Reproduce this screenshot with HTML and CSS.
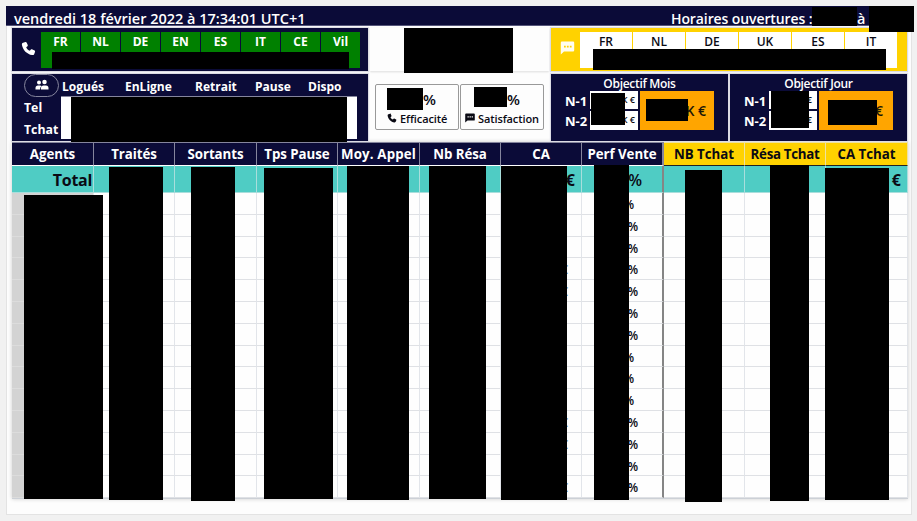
FILE: index.html
```
<!DOCTYPE html>
<html lang="fr">
<head>
<meta charset="utf-8">
<title>Suivi des agents</title>
<link rel="stylesheet" href="styles.css">
</head>
<body>
<main class="board">
  <header class="topbar"><span class="date">vendredi 18 février 2022 à 17:34:01 UTC+1</span><span class="hours">Horaires ouvertures :</span><span class="to">à</span></header>

  <section class="queues">
    <div class="panel phone">
      <svg class="ico-phone" viewBox="0 0 24 24"><path d="M7.2 1.5 3.4 2.8C1.8 3.4 1.2 4.700 1.500 6.300 3 14.500 9.500 21 17.700 22.500c1.600.3 2.900-.3 3.500-1.900l1.300-3.600c.2-.7-.1-1.300-.7-1.700l-4.300-2.100c-.6-.3-1.200-.1-1.700.4l-1.700 2.100C11.500 14.500 9.500 12.500 8.300 9.900l2.100-1.700c.5-.5.7-1.100.4-1.700L8.900 2.200C8.600 1.600 7.900 1.300 7.200 1.500z"/></svg>
      <div class="langs green"><b>FR</b><b>NL</b><b>DE</b><b>EN</b><b>ES</b><b>IT</b><b>CE</b><b>Vil</b></div>
    </div>
    <div class="panel brand"></div>
    <div class="panel chat">
      <svg class="ico-chat" viewBox="0 0 24 24"><path fill-rule="evenodd" d="M2.500 1h19q2 0 2 2v13q0 2-2 2H6l-5.500 5V3q0-2 2-2zM6 8v3h3V8zm5 0v3h3V8zm5 0v3h3V8z"/></svg>
      <div class="langs white"><b>FR</b><b>NL</b><b>DE</b><b>UK</b><b>ES</b><b>IT</b></div>
    </div>
  </section>

  <section class="stats">
    <div class="panel presence">
      <div class="side">
        <span class="pill"><svg viewBox="0 0 28 22"><circle cx="8" cy="6" r="4"/><circle cx="19" cy="5" r="4.500"/><path d="M1 20v-3q0-5 5-5h4q2 0 3 1-3 2-3 7zM12 20v-3q0-5 5-5h5q5 0 5 5v3z"/></svg></span>
        <b>Tel</b><b>Tchat</b>
      </div>
      <div class="states">
        <div class="heads"><b>Logués</b><b>EnLigne</b><b>Retrait</b><b>Pause</b><b>Dispo</b></div>
        <div class="values"></div>
      </div>
    </div>
    <div class="rates">
      <div class="rate"><strong>%</strong><span><svg viewBox="0 0 24 24"><path d="M7.200 1.500 3.400 2.800C1.800 3.400 1.200 4.700 1.500 6.300 3 14.500 9.500 21 17.700 22.500c1.600.3 2.900-.3 3.500-1.900l1.300-3.600c.2-.7-.1-1.300-.7-1.700l-4.300-2.100c-.6-.3-1.200-.1-1.700.4l-1.700 2.100C11.500 14.500 9.500 12.500 8.300 9.900l2.100-1.700c.5-.5.7-1.100.4-1.700L8.900 2.200C8.600 1.600 7.900 1.300 7.200 1.500z"/></svg>Efficacité</span></div>
      <div class="rate second"><strong>%</strong><span><svg viewBox="0 0 24 24"><path fill-rule="evenodd" d="M2.500 1h19q2 0 2 2v13q0 2-2 2H6l-5.500 5V3q0-2 2-2zM6 8v3h3V8zm5 0v3h3V8zm5 0v3h3V8z"/></svg>Satisfaction</span></div>
    </div>
    <div class="panel goal">
      <h2>Objectif Mois</h2>
      <div class="goal-grid"><b>N-1</b><i>K €</i><b>N-2</b><i>K €</i><strong>K €</strong></div>
    </div>
    <div class="panel goal day">
      <h2>Objectif Jour</h2>
      <div class="goal-grid"><b>N-1</b><i>€</i><b>N-2</b><i>€</i><strong>€</strong></div>
    </div>
  </section>

  <section class="agents">
    <div class="row head"><b>Agents</b><b>Traités</b><b>Sortants</b><b>Tps Pause</b><b>Moy. Appel</b><b>Nb Résa</b><b>CA</b><b>Perf Vente</b><b>NB Tchat</b><b>Résa Tchat</b><b>CA Tchat</b></div>
    <div class="row total"><b>Total</b><b></b><b></b><b></b><b></b><b></b><b>€</b><b>%</b><b></b><b></b><b>€</b></div>
    <div class="row narrow"><span></span><span></span><span></span><span></span><span></span><span></span><span></span><span>%</span><span></span><span></span><span></span></div>
    <div class="row"><span></span><span></span><span></span><span></span><span></span><span></span><span></span><span>%</span><span></span><span></span><span></span></div>
    <div class="row"><span></span><span></span><span></span><span></span><span></span><span></span><span></span><span>%</span><span></span><span></span><span></span></div>
    <div class="row"><span></span><span></span><span></span><span></span><span></span><span></span><span>€</span><span>%</span><span></span><span></span><span></span></div>
    <div class="row"><span></span><span></span><span></span><span></span><span></span><span></span><span>€</span><span>%</span><span></span><span></span><span></span></div>
    <div class="row"><span></span><span></span><span></span><span></span><span></span><span></span><span></span><span>%</span><span></span><span></span><span></span></div>
    <div class="row"><span></span><span></span><span></span><span></span><span></span><span></span><span></span><span>%</span><span></span><span></span><span></span></div>
    <div class="row narrow"><span></span><span></span><span></span><span></span><span></span><span></span><span></span><span>%</span><span></span><span></span><span></span></div>
    <div class="row narrow"><span></span><span></span><span></span><span></span><span></span><span></span><span></span><span>%</span><span></span><span></span><span></span></div>
    <div class="row narrow"><span></span><span></span><span></span><span></span><span></span><span></span><span></span><span>%</span><span></span><span></span><span></span></div>
    <div class="row"><span></span><span></span><span></span><span></span><span></span><span></span><span>€</span><span>%</span><span></span><span></span><span></span></div>
    <div class="row"><span></span><span></span><span></span><span></span><span></span><span></span><span>€</span><span>%</span><span></span><span></span><span></span></div>
    <div class="row"><span></span><span></span><span></span><span></span><span></span><span></span><span></span><span>%</span><span></span><span></span><span></span></div>
    <div class="row"><span></span><span></span><span></span><span></span><span></span><span></span><span>€</span><span>%</span><span></span><span></span><span></span></div>
  </section>
</main>

<!-- Masks hiding confidential values -->
<svg class="masks" viewBox="0 0 917 521">
  <rect x="812" y="7" width="45" height="19"/><rect x="869" y="6" width="45" height="26"/>
  <rect x="52" y="52" width="297" height="17"/><rect x="404" y="28" width="109" height="45"/><rect x="593" y="49" width="293" height="21"/>
  <rect x="71" y="97" width="276" height="45"/><rect x="387" y="88" width="36" height="22"/><rect x="474" y="87" width="33" height="20"/>
  <rect x="591" y="93" width="34" height="32"/><rect x="646" y="99" width="42" height="22"/><rect x="771" y="91" width="38" height="37"/><rect x="828" y="100" width="49" height="25"/>
  <rect x="24" y="195" width="79" height="304"/><rect x="109" y="167" width="54" height="333"/><rect x="191" y="167" width="44" height="334"/><rect x="264" y="168" width="69" height="331"/>
  <rect x="347" y="166" width="62" height="334"/><rect x="429" y="166" width="57" height="333"/><rect x="501" y="166" width="66" height="334"/><rect x="594" y="165" width="35" height="335"/>
  <rect x="685" y="170" width="37" height="332"/><rect x="770" y="165" width="39" height="336"/><rect x="825" y="168" width="64" height="332"/>
</svg>
</body>
</html>
```
FILE: styles.css
```
* { box-sizing: border-box; }
body { margin: 0; width: 917px; height: 521px; overflow: hidden; background: #f1f1f1; font-family: "Open Sans", "Noto Sans", sans-serif; font-size: 12px; color: #0a0a14; }
b, strong { font-weight: 700; }
svg { display: block; fill: currentColor; }
.board { margin: 6px 0 0 6px; width: 906px; height: 509px; background: #fdfdfd; box-shadow: inset 0 0 0 1px #e3e3e3; }
.topbar { display: flex; height: 20px; width: 907px; background: #0b0b38; color: #fff; font-size: 14.500px; font-weight: 600; line-height: 25px; white-space: nowrap; border-bottom: 1px solid #55557a; }
.date { margin-left: 8px; width: 657px; }
.hours { width: 186px; font-size: 14px; letter-spacing: -0.100px; }
.panel { background: #0b0b38; box-shadow: 0 0 1px 1px #dcdce4; }

.queues { display: grid; grid-template-columns: 356px 179px 356px; column-gap: 2px; height: 43px; margin: 2px 0 0 6px; }
.phone, .chat { display: flex; padding-top: 4px; }
.ico-phone { width: 15px; height: 15px; margin: 9px 5px 0 9px; color: #fff; }
.langs { display: grid; height: 36px; text-align: center; line-height: 19px; }
.green { grid-template-columns: repeat(8, 39px); column-gap: 1px; color: #fff; }
.green b { background: #008000; }
.panel.brand { background: #fdfdfd; box-shadow: 0 1px 2px #ddd; }
.panel.chat { background: #ffd200; }
.ico-chat { width: 15px; height: 14px; margin: 9px 5px 0 9px; color: #fffdf0; }
.white { grid-template-columns: repeat(6, 52px); column-gap: 1px; }
.white b { background: #fff; font-weight: 600; }

.stats { display: grid; grid-template-columns: 356px 179px 177px 177px; column-gap: 2px; height: 65px; margin: 3px 0 0 6px; }
.presence { display: flex; color: #fff; }
.side { display: flex; flex-direction: column; width: 49px; padding-left: 12px; }
.side b { height: 22px; line-height: 22px; font-size: 12.300px; }
.pill { width: 35px; height: 23px; border: 1px solid #85859d; border-radius: 12px; padding: 4px 0 0 10px; }
.pill svg { width: 14px; height: 12px; }
.states { width: 296px; }
.heads { display: grid; grid-template-columns: 63px 70px 60px 53px 50px; height: 23px; line-height: 25px; padding-left: 1px; border-bottom: 1px solid #85859d; white-space: nowrap; }
.values { height: 42px; background: #fff; }
.rates { display: flex; gap: 1px; padding: 10px 0 0 5px; }
.rate { width: 84px; height: 46px; border: 1px solid #999; border-radius: 2px; }
.rate strong { display: block; height: 24px; line-height: 28px; font-size: 15px; font-weight: 600; padding-left: 47px; }
.rate.second strong { padding-left: 46px; }
.rate span { display: flex; height: 19px; line-height: 19px; padding-left: 11px; font-size: 11px; font-weight: 600; letter-spacing: -0.100px; }
.rate.second span { padding-left: 4px; }
.rate svg { width: 10px; height: 10px; margin: 4px 3px 0 0; }
.goal { color: #fff; }
.goal h2 { margin: 0; height: 17px; line-height: 20px; font-size: 12px; font-weight: 600; letter-spacing: -0.300px; text-align: center; }
.goal-grid { display: grid; grid-template: 18px 19px / 23px 48px 74px; gap: 2px; margin-left: 14px; }
.goal-grid b { line-height: 20px; font-size: 13px; grid-column: 1; }
.goal-grid i { grid-column: 2; background: #fff; color: #0a0a14; font: 600 9px/17px "Open Sans", sans-serif; text-align: right; padding-right: 3px; }
.goal-grid strong { grid-area: 1 / 3 / 3 / 4; background: #ffa500; color: #1b1608; font-size: 14px; line-height: 40px; text-align: right; padding-right: 8px; font-weight: 600; }
.goal.day strong { padding-right: 10px; }
.goal.day i { padding-right: 5px; }

.agents { margin: 3px 0 0 6px; width: 896px; border-bottom: 1px solid #ccd0d6; box-shadow: 0 0 4px #ccc; }
.row { display: grid; grid-template-columns: 82px 81px 82px 81px 82px 81px 81px 82px 81px 81px 82px; grid-template-rows: 100%; height: 21.800px; line-height: 24px; font-weight: 600; }
.row > * { border-right: 1px solid #e2e5ea; border-bottom: 1px solid #dfe1e5; text-align: right; background: #fefefe; }
.row > :nth-child(8) { border-right: 2px solid #858585; padding-right: 24px; }
.row > span:nth-child(7) { padding-right: 13px; color: #5b88b8; }
.row > span:first-child { background: #d3d3d3; border-bottom-color: #dcdcdc; }
.row.narrow > :nth-child(8) { padding-right: 28px; }
.head { height: 24px; line-height: 22px; font-size: 13.300px; letter-spacing: -0.050px; color: #fff; white-space: nowrap; }
.head > b, .head > b:nth-child(8) { background: #0b0b38; text-align: center; padding: 0; border-color: #85859d; border-bottom-color: #fff; border-top: 1px solid #85859d; }
.head > b:nth-child(5) { letter-spacing: 0.150px; }
.head > b:nth-child(n+9) { background: #ffd200; color: #0a0a14; border-color: #eee2a1; border-bottom: 1px solid #222; }
.head > b:nth-child(10) { letter-spacing: -0.300px; }
.total { height: 27px; font-size: 16px; line-height: 29px; }
.total > b { background: #4fccc4; border-color: #a9dedc; padding-right: 1px; }
.total > b:first-child { letter-spacing: -0.300px; }
.total > b:nth-child(7) { padding-right: 6px; }
.total > b:nth-child(8) { padding-right: 20px; font-weight: 600; }
.total > b:last-child { padding-right: 6px; }
.masks { position: absolute; left: 0; top: 0; width: 917px; height: 521px; fill: #000; }
```
